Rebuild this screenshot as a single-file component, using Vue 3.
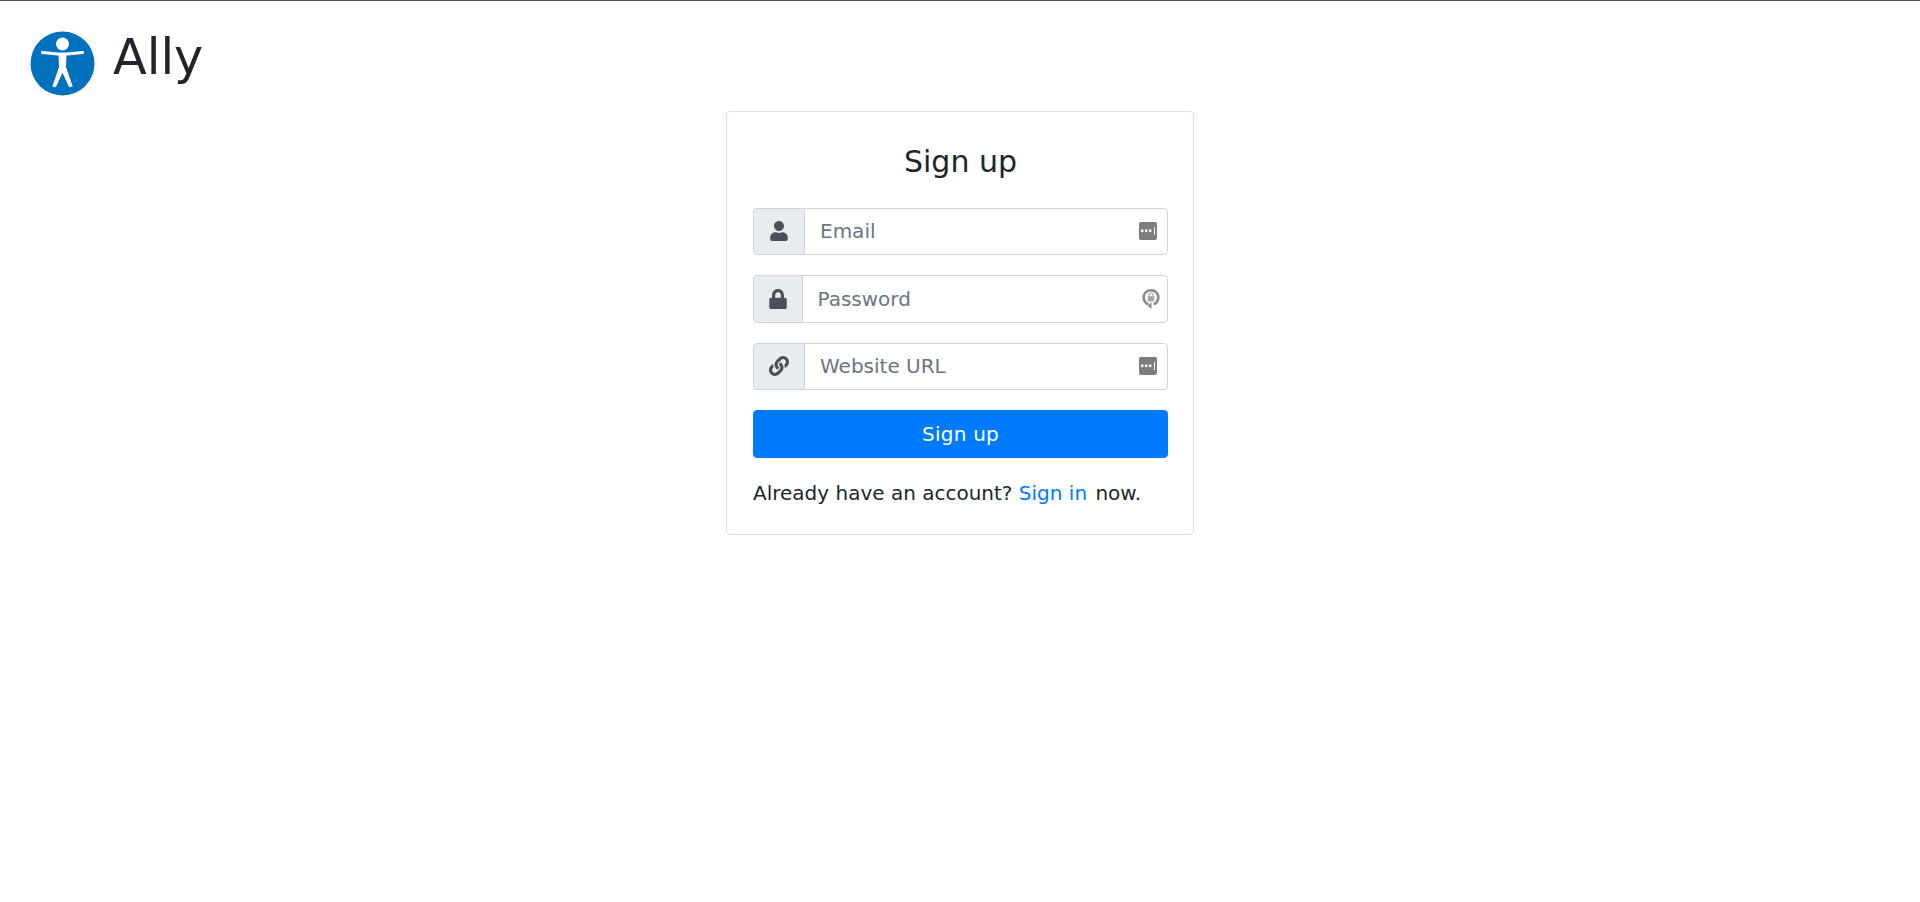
<script setup>
const fields = [
  { name: 'email', type: 'text', placeholder: 'Email', icon: 'user', filler: 'dots' },
  { name: 'password', type: 'password', placeholder: 'Password', icon: 'lock', filler: 'key' },
  { name: 'website', type: 'text', placeholder: 'Website URL', icon: 'link', filler: 'dots' }
];
</script>

<template>
  <div class="page">
    <header class="brand">
      <svg class="logo" viewBox="0 0 65 65">
        <circle cx="32.5" cy="32.5" r="32" fill="#0071bc" />
        <circle cx="32.5" cy="13" r="6.5" fill="#fff" />
        <path d="M12.5 21.5L28 23H37L52.500 21.500" fill="none" stroke="#fff" stroke-width="3.200" stroke-linecap="round" />
        <path d="M28.500 23h8l-.500 13 6.700 19.500-3.500.700-6.700-14.500-6.700 14.500-3.500-.700L29 36z" fill="#fff" />
      </svg>
      <h1>Ally</h1>
    </header>

    <form class="card" @submit.prevent>
      <h2>Sign up</h2>

      <div v-for="field in fields" :key="field.name" class="input-group">
        <span class="addon" :class="'addon-' + field.icon">
          <svg v-if="field.icon === 'user'" width="20" height="20" viewBox="0 0 448 512">
            <path fill="#495057" d="M224 256c70.700 0 128-57.300 128-128S294.700 0 224 0 96 57.300 96 128s57.300 128 128 128zm89.600 32h-16.700c-22.200 10.200-46.900 16-72.900 16s-50.600-5.800-72.900-16h-16.700C60.200 288 0 348.200 0 422.400V464c0 26.500 21.500 48 48 48h352c26.500 0 48-21.500 48-48v-41.600c0-74.200-60.200-134.400-134.400-134.400z" />
          </svg>
          <svg v-else-if="field.icon === 'lock'" width="20" height="20" viewBox="0 0 448 512">
            <path fill="#495057" d="M400 224h-24v-72C376 68.200 307.800 0 224 0S72 68.200 72 152v72H48c-26.500 0-48 21.500-48 48v192c0 26.500 21.500 48 48 48h352c26.500 0 48-21.500 48-48V272c0-26.500-21.500-48-48-48zm-104 0H152v-72c0-39.700 32.300-72 72-72s72 32.300 72 72v72z" />
          </svg>
          <svg v-else width="20" height="20" viewBox="0 0 512 512">
            <path fill="#495057" d="M326.600 185.400c59.700 59.800 58.900 155.700.4 214.600l-.4.400-67.200 67.200c-59.300 59.300-155.700 59.300-215 0-59.300-59.300-59.300-155.700 0-215l37.100-37.100c9.800-9.800 26.800-3.300 27.300 10.600.6 17.700 3.800 35.500 9.700 52.700 2 5.800.6 12.300-3.800 16.600l-13.100 13.100c-28 28-28.900 73.700-1.200 102 28 28.500 74 28.700 102.200.4l67.200-67.200c28.200-28.200 28.100-73.800 0-101.800-3.700-3.700-7.400-6.600-10.300-8.600-4.200-2.900-6.700-7.500-6.900-12.600-.4-10.600 3.400-21.500 11.700-29.800l21.100-21.100c5.500-5.500 14.200-6.200 20.600-1.800 7.300 5.100 14.200 10.900 20.600 17.300zM467.500 44.400c-59.300-59.300-155.700-59.300-215 0l-67.200 67.200-.4.400c-58.500 58.900-59.300 154.800.4 214.600 6.400 6.400 13.300 12.200 20.600 17.300 6.400 4.400 15.100 3.700 20.600-1.800l21.100-21.100c8.300-8.300 12.100-19.200 11.700-29.800-.2-5.100-2.700-9.700-6.900-12.600-2.900-2-6.600-4.900-10.300-8.600-28.100-28-28.200-73.600 0-101.800l67.200-67.200c28.200-28.300 74.200-28.100 102.200.4 27.700 28.300 26.800 74-1.200 102l-13.100 13.100c-4.400 4.300-5.800 10.800-3.800 16.600 5.900 17.200 9.100 35 9.700 52.700.5 13.900 17.500 20.400 27.300 10.600l37.100-37.100c59.300-59.300 59.300-155.700 0-215z" />
          </svg>
        </span>
        <div class="control">
          <input :type="field.type" :name="field.name" :placeholder="field.placeholder" />
          <svg v-if="field.filler === 'dots'" class="filler" width="18" height="18" viewBox="0 0 18 18">
            <rect width="18" height="18" rx="2" fill="#7d7d7d" />
            <rect x="2" y="7.500" width="2.400" height="2.600" fill="#fff" />
            <rect x="6" y="7.500" width="2.400" height="2.600" fill="#fff" />
            <rect x="10" y="7.500" width="2.400" height="2.600" fill="#fff" />
            <rect x="15" y="5" width="1" height="8" fill="#fff" />
          </svg>
          <svg v-else class="filler filler-key" width="18" height="22" viewBox="0 0 18 22">
            <path d="M11.500 16.300A7.300 7.300 0 1 0 6.500 16.300" fill="none" stroke="#8a8a8a" stroke-width="2.500" />
            <path d="M9.500 14.500v6.500l-4-3.200z" fill="#8a8a8a" />
            <rect x="5.700" y="8" width="6.600" height="5.500" rx="1" fill="#a8a8a8" />
            <path d="M7 8.500V7a2 2 0 0 1 4 0v1.500" fill="none" stroke="#a8a8a8" stroke-width="1.200" />
          </svg>
        </div>
      </div>

      <button type="submit">Sign up</button>
      <p class="note">Already have an account? <a href="#">Sign in</a> now.</p>
    </form>
  </div>
</template>

<style scoped>
.page {
  border-top: 1px solid #555;
  font-family: "DejaVu Sans", sans-serif;
  color: #212529;
}

.brand {
  display: flex;
  align-items: center;
  gap: 18px;
  padding: 30px 30px 0;
}

.logo {
  width: 65px;
  height: 65px;
  display: block;
}

h1 {
  margin: 0 0 12px;
  font-size: 49.300px;
  font-weight: 400;
  line-height: 1;
}

.card {
  box-sizing: border-box;
  width: 468px;
  margin: 15px auto 0;
  padding: 31.500px 25px 26px 26px;
  background: #fff;
  border: 1px solid #dfdfdf;
  border-radius: 4px;
}

h2 {
  margin: 0 0 28px;
  font-size: 30px;
  font-weight: 400;
  line-height: 1.2;
  text-align: center;
}

.input-group {
  display: flex;
  height: 47.500px;
  margin-bottom: 20px;
}

.addon {
  display: flex;
  align-items: center;
  justify-content: center;
  box-sizing: border-box;
  width: 52px;
  flex-shrink: 0;
  background: #e9ecef;
  border: 1px solid #ced4da;
  border-radius: 4px 0 0 4px;
}

.addon-lock {
  width: 49.500px;
}

.control {
  position: relative;
  flex: 1;
  min-width: 0;
  margin-left: -1px;
}

input {
  box-sizing: border-box;
  display: block;
  width: 100%;
  height: 100%;
  padding: 0 15px;
  font: inherit;
  font-size: 20px;
  color: #495057;
  background: #fff;
  border: 1px solid #ced4da;
  border-radius: 0 4px 4px 0;
  outline: none;
}

input::placeholder {
  color: #6c757d;
  opacity: 1;
}

.filler {
  position: absolute;
  top: 50%;
  right: 11px;
  transform: translateY(-50%);
}

.filler-key {
  right: 8px;
}

button {
  display: block;
  width: 100%;
  height: 47.500px;
  margin: 0;
  padding: 0;
  font: inherit;
  font-size: 20px;
  letter-spacing: 0.25px;
  color: #fff;
  background: #007bff;
  border: 1px solid #007bff;
  border-radius: 4px;
}

.note {
  margin: 20px 0 0;
  font-size: 20px;
  line-height: 30px;
}

a {
  color: #007bff;
  text-decoration: none;
  margin-right: 2px;
}
</style>

<style>
body {
  background: #fff;
}
</style>
